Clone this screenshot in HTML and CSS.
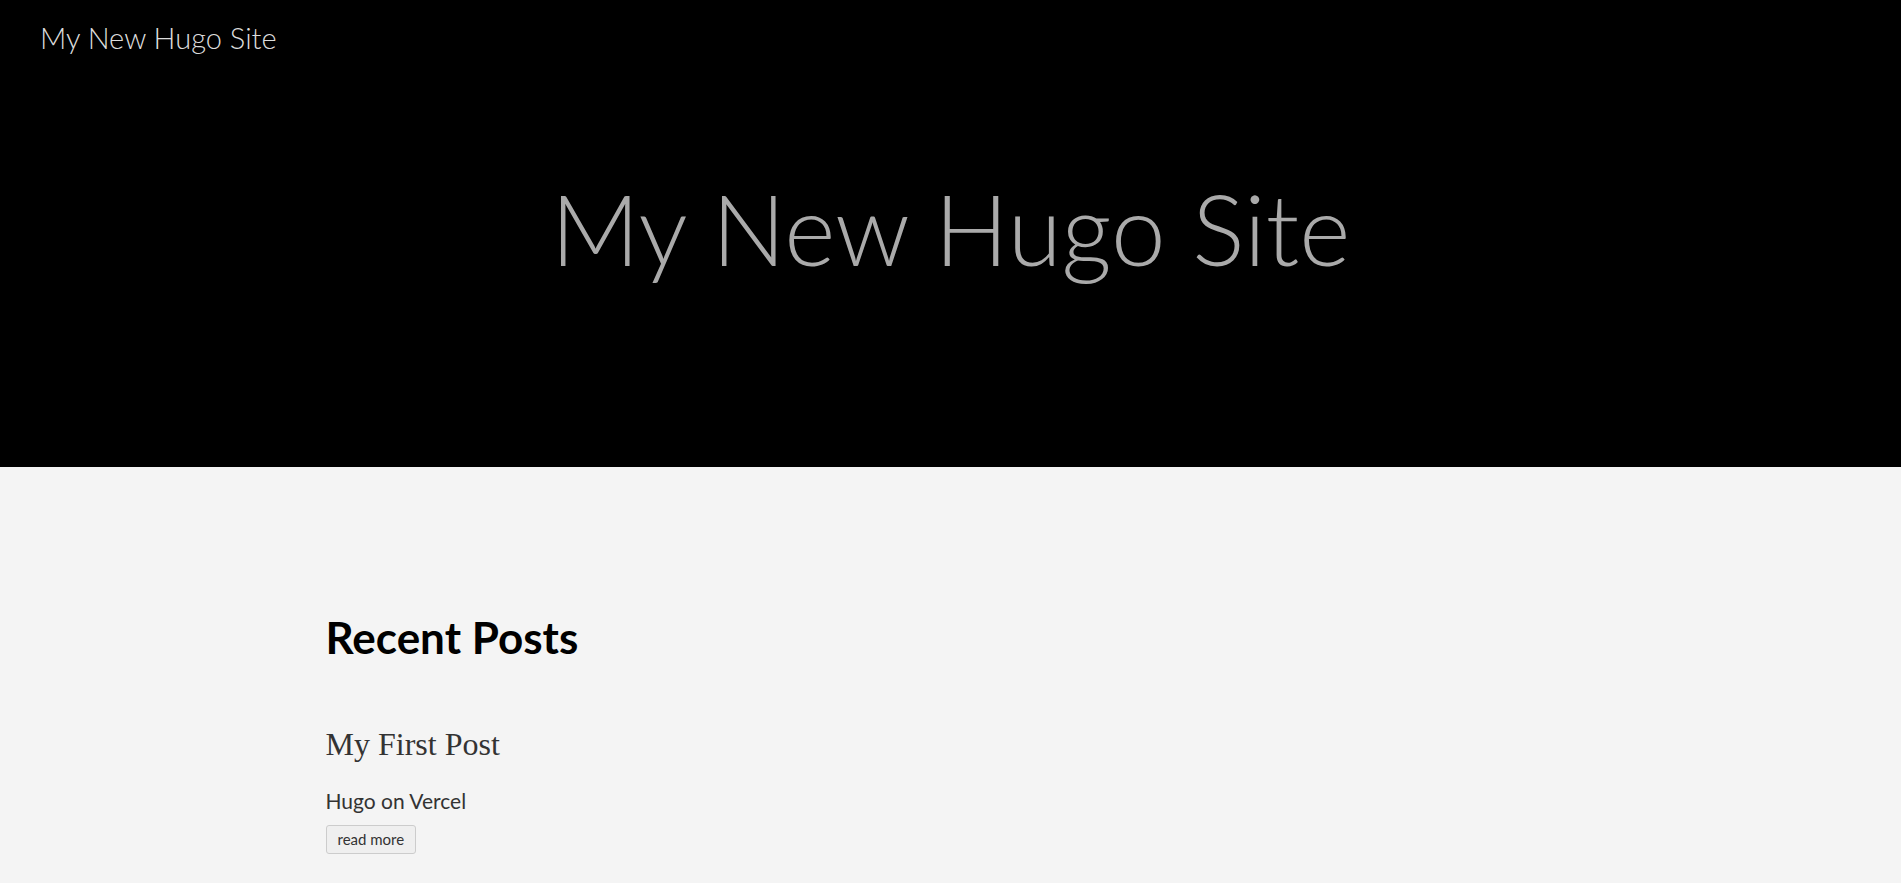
FILE: index.html
```html
<!DOCTYPE html>
<html lang="en">
<head>
<meta charset="utf-8">
<title>My New Hugo Site</title>
<link rel="stylesheet" href="styles.css">
</head>
<body>
<header class="site-header">
  <nav class="site-nav">
    <a class="site-brand" href="#">My New Hugo Site</a>
  </nav>
  <div class="hero">
    <h1 class="hero-title">My New Hugo Site</h1>
  </div>
</header>
<main class="content">
  <h2 class="section-title">Recent Posts</h2>
  <article class="post">
    <h3 class="post-title">My First Post</h3>
    <p class="post-summary">Hugo on Vercel</p>
    <a class="read-more" href="#">read more</a>
  </article>
</main>
</body>
</html>
```

FILE: styles.css
```css
html, body {
  margin: 0;
  padding: 0;
}
body {
  background: #f4f4f4;
  font-family: Lato, "Source Sans Pro", "Liberation Sans", sans-serif;
  color: #333;
}
.site-header {
  background: #000;
  height: 467px;
  box-sizing: border-box;
}
.site-nav {
  padding: 18px 40px 0;
}
.site-brand {
  color: #dcdcdc;
  text-decoration: none;
  font-size: 29px;
  font-weight: 300;
  line-height: 40px;
}
.hero {
  display: flex;
  justify-content: center;
  padding-top: 105px;
}
.hero-title {
  margin: 0;
  color: #aaa;
  font-size: 98px;
  font-weight: 300;
  line-height: 130px;
}
.content {
  width: 1250px;
  margin: 0 auto;
  padding-top: 140px;
}
.section-title {
  margin: 0;
  color: #000;
  font-size: 44px;
  font-weight: 700;
  line-height: 60px;
}
.post {
  padding-top: 57px;
}
.post-title {
  margin: 0;
  font-family: Georgia, "Liberation Serif", serif;
  font-weight: 400;
  font-size: 32px;
  line-height: 40px;
  color: #333;
}
.post-summary {
  margin: 23px 0 10px;
  font-size: 21px;
  line-height: 28px;
  color: #333;
}
.read-more {
  display: inline-block;
  padding: 3px 11px;
  font-size: 15px;
  line-height: 21px;
  color: #333;
  text-decoration: none;
  background: #efefef;
  border: 1px solid #ccc;
  border-radius: 3px;
}
```
